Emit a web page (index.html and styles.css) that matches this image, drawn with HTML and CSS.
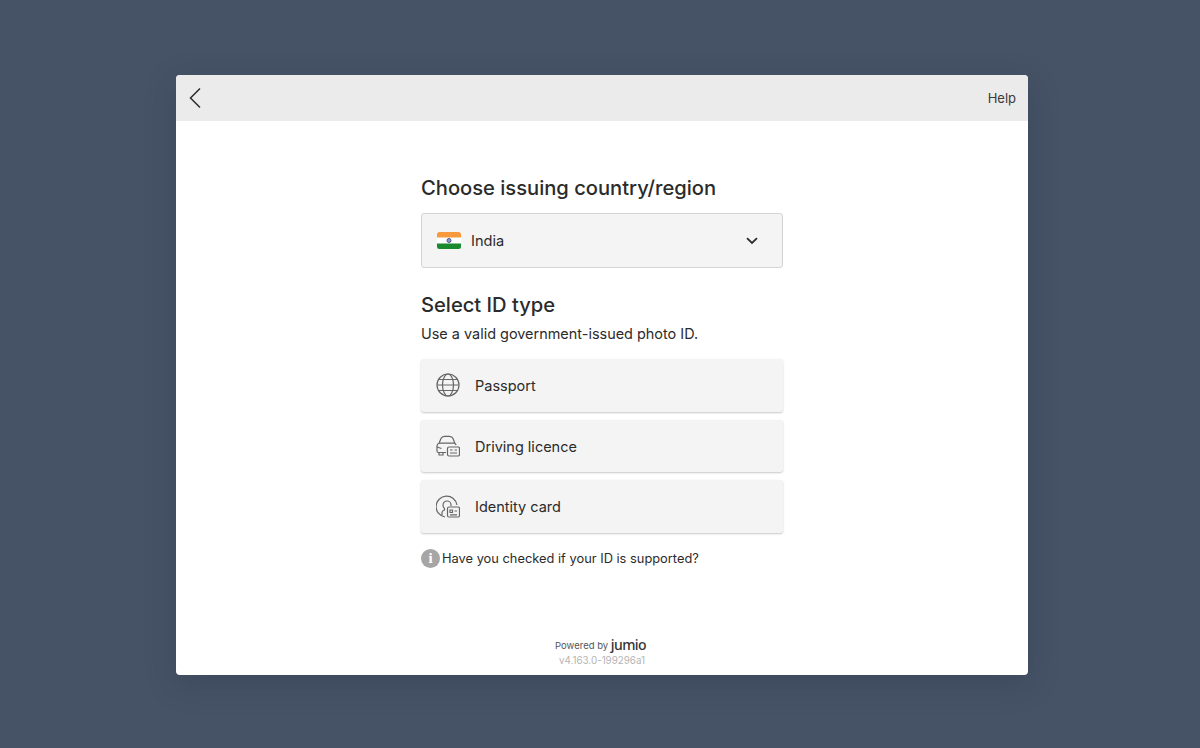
FILE: index.html
```html
<!DOCTYPE html>
<html lang="en">
<head>
    <meta charset="UTF-8">
    <meta name="viewport" content="width=device-width, initial-scale=1.0">
    <title>Select ID type</title>
    <link rel="stylesheet" href="styles.css">
</head>
<body>
    <div class="window">
        <div class="topbar">
            <svg class="back" width="14" height="22" viewBox="0 0 14 22" fill="none" stroke="#2b2b2b" stroke-width="1.5">
                <path d="M12 1.5 L2.5 11 L12 20.5"/>
            </svg>
            <span class="help">Help</span>
        </div>

        <div class="content">
            <h2 class="first">Choose issuing country/region</h2>
            <div class="select">
                <svg class="flag" width="24" height="17" viewBox="0 0 24 17">
                    <rect width="24" height="17" rx="2.5" fill="#fff"/>
                    <path d="M0 5.5 V2.5 a2.5 2.5 0 0 1 2.5 -2.5 H21.5 a2.5 2.5 0 0 1 2.5 2.5 V5.5 Z" fill="#f79a3e"/>
                    <path d="M0 11.5 V14.5 a2.5 2.5 0 0 0 2.5 2.5 H21.5 a2.5 2.5 0 0 0 2.5 -2.5 V11.5 Z" fill="#1b8a2e"/>
                    <circle cx="12" cy="8.5" r="2" fill="#8f9ac4" stroke="#3b4a8c" stroke-width="0.9"/>
                </svg>
                <span class="country">India</span>
                <svg class="chevron" width="12" height="8" viewBox="0 0 12 8" fill="none" stroke="#2b2b2b" stroke-width="1.8">
                    <path d="M1 1.2 L6 6 L11 1.2"/>
                </svg>
            </div>

            <h2 class="second">Select ID type</h2>
            <p class="hint">Use a valid government-issued photo ID.</p>

            <div class="options">
                <div class="option">
                    <svg class="icon" width="24" height="24" viewBox="0 0 24 24" fill="none" stroke="#666" stroke-width="1.2">
                        <circle cx="12" cy="12" r="11"/>
                        <ellipse cx="12" cy="12" rx="5.5" ry="11"/>
                        <path d="M3 6.5 H21 M1 12 H23 M3 17.5 H21"/>
                    </svg>
                    <span>Passport</span>
                </div>
                <div class="option">
                    <svg class="icon" width="24" height="24" viewBox="0 0 24 24" fill="none" stroke="#666" stroke-width="1.2">
                        <path d="M10 18.5 H2.5 a1.5 1.5 0 0 1 -1.5 -1.5 V12 a3 3 0 0 1 2 -2.8 L5 4.5 C5.6 3 6.8 2.3 8.5 2.3 H13.5 C15.2 2.3 16.4 3 17 4.5 L18.8 9.2 a3 3 0 0 1 1.2 2"/>
                        <path d="M3 9.2 H19 M1 13 L5.5 14.5 M3 18.5 V21 H7 V18.5"/>
                        <rect x="11.5" y="13" width="12" height="9" rx="1.5" fill="#f4f4f4"/>
                        <path d="M14 16 H16.5 M14 19 H21 M18.5 16 H21"/>
                    </svg>
                    <span>Driving licence</span>
                </div>
                <div class="option">
                    <svg class="icon" width="24" height="24" viewBox="0 0 24 24" fill="none" stroke="#666" stroke-width="1.2">
                        <path d="M9 22 A10.5 10.5 0 1 1 21 10"/>
                        <path d="M6 20 V17.5 a3 3 0 0 1 2.5 -2.5 V13.5 a4.5 4.5 0 0 1 -1.5 -3.5 a4 4 0 0 1 8 0 V11"/>
                        <rect x="11.5" y="12" width="12" height="10" rx="1.5" fill="#f4f4f4"/>
                        <path d="M14 15 H16.5 V17.5 H14 Z M14 19.8 H21 M18.5 16 H21"/>
                    </svg>
                    <span>Identity card</span>
                </div>
            </div>

            <div class="supported">
                <span class="info">i</span>
                <span>Have you checked if your ID is supported?</span>
            </div>
        </div>

        <div class="footer">
            <div class="powered">Powered by <span class="brand">jumio</span></div>
            <div class="version">v4.163.0-199296a1</div>
        </div>
    </div>
</body>
</html>
```
FILE: styles.css
```css
html, body {
    height: 100%;
}
body {
    margin: 0;
    background-color: #465366;
    font-family: Inter, "Liberation Sans", sans-serif;
    color: #2b2b2b;
    display: flex;
    justify-content: center;
    padding-top: 75px;
    padding-left: 4px;
    box-sizing: border-box;
    overflow: hidden;
}
.window {
    width: 852px;
    height: 600px;
    background-color: #fff;
    border-radius: 4px;
    box-shadow: 0 8px 30px rgba(30, 40, 60, 0.25);
    overflow: hidden;
    display: flex;
    flex-direction: column;
}
.topbar {
    height: 46px;
    flex-shrink: 0;
    background-color: #ebebeb;
    display: flex;
    align-items: center;
    justify-content: space-between;
    padding: 0 12px 0 12px;
}
.help {
    font-size: 13px;
    color: #3a3a3a;
}
.content {
    width: 362px;
    margin: 0 auto;
    flex: 1;
}
h2 {
    font-size: 20.15px;
    line-height: 24px;
    font-weight: 500;
    margin: 0;
}
h2.first {
    margin-top: 55px;
}
h2.second {
    margin-top: 25px;
}
.select {
    margin-top: 13px;
    height: 55px;
    box-sizing: border-box;
    border: 1px solid #d4d4d4;
    border-radius: 3px;
    background-color: #f4f4f4;
    display: flex;
    align-items: center;
    padding: 0 24px 0 15px;
}
.country {
    font-size: 14.6px;
    margin-left: 10px;
    flex: 1;
}
.hint {
    font-size: 14.45px;
    line-height: 20px;
    margin: 7px 0 15px;
}
.options {
    display: flex;
    flex-direction: column;
    gap: 8px;
}
.option {
    height: 52.7px;
    background-color: #f4f4f4;
    border-radius: 3px;
    box-shadow: 0 1px 2px rgba(0, 0, 0, 0.22);
    display: flex;
    align-items: center;
    padding-left: 15px;
    font-size: 14.5px;
}
.option .icon {
    margin-right: 15px;
}
.supported {
    margin-top: 15.5px;
    display: flex;
    align-items: center;
    gap: 2px;
    font-size: 12.85px;
}
.info {
    width: 19px;
    height: 19px;
    border-radius: 50%;
    background-color: #a6a6a6;
    color: #fff;
    font-family: "Liberation Serif", serif;
    font-weight: 700;
    font-size: 15px;
    line-height: 19px;
    text-align: center;
}
.footer {
    text-align: center;
    padding-bottom: 8px;
}
.powered {
    font-size: 9.5px;
    line-height: 16px;
    color: #555;
    padding-right: 3px;
}
.brand {
    font-family: "Noto Sans", sans-serif;
    font-size: 14px;
    font-weight: 500;
    letter-spacing: -0.6px;
    color: #333;
    position: relative;
    top: 1px;
}
.version {
    font-size: 9.8px;
    line-height: 12px;
    color: #b5b5b5;
    margin-top: 1px;
}
```
